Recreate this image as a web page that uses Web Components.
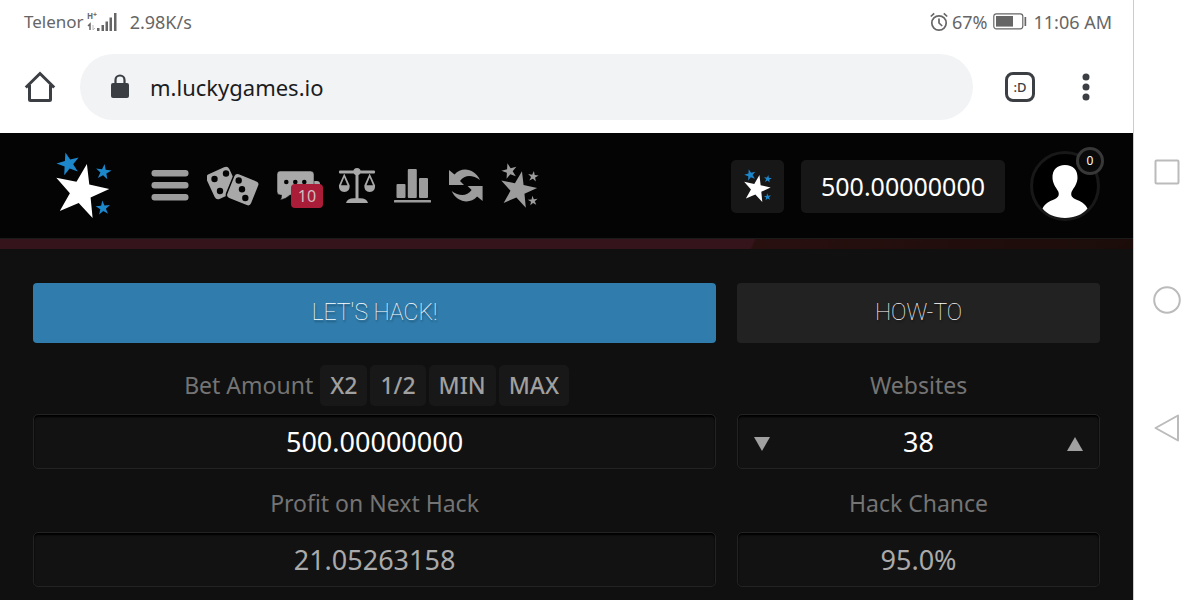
<!DOCTYPE html>
<html lang="en">
<head>
<meta charset="utf-8">
<meta name="viewport" content="width=device-width, initial-scale=1">
<title>Lucky Games – Hack</title>
<style>
  body { margin: 0; background: #fff; font-family: "Noto Sans", "Open Sans", sans-serif; }
</style>
</head>
<body>
<phone-screen>
  <status-bar></status-bar>
  <browser-bar></browser-bar>
  <game-header></game-header>
  <hack-panel></hack-panel>
  <nav-rail slot="rail"></nav-rail>
</phone-screen>

<script>
const define = (name, html, setup) => {
  const template = document.createElement('template');
  template.innerHTML = html;
  customElements.define(name, class extends HTMLElement {
    constructor() {
      super();
      this.attachShadow({ mode: 'open' }).append(template.content.cloneNode(true));
    }
    connectedCallback() { if (setup) setup(this, this.shadowRoot); }
  });
};

const RESET = `:host,*{box-sizing:border-box} svg{display:block} button{border:0;padding:0;background:none;font:inherit;color:inherit;cursor:pointer}`;

/* Five-pointed star, rotated clockwise by `turn` degrees. */
const star = (cx, cy, r, turn, fill) => {
  const pts = [];
  for (let i = 0; i < 10; i++) {
    const a = (turn - 90 + i * 36) * Math.PI / 180, d = i % 2 ? r * 0.39 : r;
    pts.push((cx + d * Math.cos(a)).toFixed(1) + ',' + (cy + d * Math.sin(a)).toFixed(1));
  }
  return `<polygon points="${pts.join(' ')}" fill="${fill}"/>`;
};
const stars = (w, h, big, small) => `<svg width="${w}" height="${h}" viewBox="0 0 56 68" aria-hidden="true">
  ${star(25, 40, 28.5, 12, big)}${star(12.5, 12, 12, -15, small)}${star(47.5, 20, 8.2, 8, small)}${star(47, 56, 7.6, -5, small)}</svg>`;

define('phone-screen', `
<style>${RESET}
  :host{display:flex;min-height:100vh}
  main{flex:1;min-width:0;display:flex;flex-direction:column}
</style>
<main><slot></slot></main><slot name="rail"></slot>`);

define('status-bar', `
<style>${RESET}
  :host{display:flex;justify-content:space-between;align-items:center;height:43px;padding:0 21px 0 24px;color:#666;font-size:18px;line-height:24px}
  div{display:flex;align-items:center}
  .carrier{font-size:17px}
  .net{margin:0 12px 0 3px}
  .alarm{margin-right:4px}
  .battery{margin:0 6px}
</style>
<div><span class="carrier">Telenor</span>
  <svg class="net" width="31" height="28" viewBox="0 -4 31 28" role="img" aria-label="Mobile signal">
    <text x="0" y="7" font-size="8" font-weight="700" fill="#666">H</text><text x="6" y="5" font-size="7" font-weight="700" fill="#666">+</text>
    <path d="M3 18v-6l-2 2" fill="none" stroke="#666" stroke-width="1.500"/><path d="M6 13v5l2-2" fill="none" stroke="#bbb"/>
    <path d="M10 16h2.500v3H10zM14.500 13H17v6h-2.500zM18.500 9.500H21V19h-2.500zM22.500 5.500H25V19h-2.500zM27 1h2.500v18H27z" fill="#666"/>
  </svg>
  <span>2.98K/s</span></div>
<div>
  <svg class="alarm" width="18" height="20" viewBox="0 0 18 20" fill="none" stroke="#666" stroke-width="1.700" role="img" aria-label="Alarm set"><circle cx="9" cy="11" r="7.200"/><path d="M9 6.500V11l3.200 3M.8 4.500 4.200 1.300M17.200 4.500 13.800 1.300"/></svg>
  <span>67%</span>
  <svg class="battery" width="34" height="17" viewBox="0 0 34 17" role="img" aria-label="Battery"><rect x=".8" y=".8" width="29" height="15" rx="2.500" fill="none" stroke="#666" stroke-width="1.200"/><path d="M3 3h17v10.600H3z" fill="#666"/><path d="M31.500 4H33.200v9h-1.700z" fill="#666"/></svg>
  <span>11:06 AM</span></div>`);

define('browser-bar', `
<style>${RESET}
  :host{display:flex;align-items:center;height:90px;padding:0 36px 2px 24px;color:#3b3f43}
  form{flex:1;min-width:0;display:flex;align-items:center;gap:20px;height:66px;margin:0 32px 0 24px;padding:0 30px;border-radius:33px;background:#f1f3f5}
  input{flex:1;min-width:0;border:0;padding:0;background:none;outline:0;font:22px/32px "Noto Sans",sans-serif;color:#1b1c1e}
  .tabs{width:30px;height:30px;border:3px solid #3b3f43;border-radius:8px;font-size:13px;line-height:22px;font-weight:500;margin-right:40px}
  .menu{width:22px;display:grid;place-items:center}
</style>
<button aria-label="Home"><svg width="32" height="32" viewBox="0 0 32 32" fill="none" stroke="currentColor" stroke-width="3"><path d="M1.800 16.500 16 2.500l14.200 14M5.500 14v14.500q0 1 1 1h19q1 0 1-1V14"/></svg></button>
<form>
  <svg width="20" height="26" viewBox="0 0 20 26"><rect x="1" y="9" width="18" height="15" rx="2" fill="currentColor"/><path d="M5.500 10V6a4.500 4.500 0 0 1 9 0v4" fill="none" stroke="currentColor" stroke-width="2.200"/></svg>
  <input type="text" aria-label="Address" value="m.luckygames.io">
</form>
<button class="tabs" aria-label="Tabs">:D</button>
<button class="menu" aria-label="More"><svg width="8" height="30" viewBox="0 0 8 30" fill="currentColor"><circle cx="4" cy="5" r="3.500"/><circle cx="4" cy="15" r="3.500"/><circle cx="4" cy="25" r="3.500"/></svg></button>`);

define('count-badge', `
<style>
  :host{display:grid;place-items:center;position:absolute;box-sizing:border-box;font-family:"Noto Sans",sans-serif}
</style><slot></slot>`);

define('game-header', `
<style>${RESET}
  :host{display:flex;align-items:center;height:116px;padding:0 33px 10px 56px;color:#9c9c9c;
    background:linear-gradient(#1b1b1b,#1b1b1b) 0 105px/100% 1px no-repeat,
      linear-gradient(115deg,#35141b 66.300%,#28100f 66.500%,#1b0c0a) 0 106px/100% 10px no-repeat,#040404}
  nav{display:flex;align-items:center;gap:18px;margin-left:39px}
  button{position:relative;flex:none}
  .spacer{flex:1}
  .alert{left:14px;top:13px;width:32px;height:24px;border-radius:4px;background:#a91d38;color:#d2bcc1;font-size:16px;line-height:22px}
  .token{width:53px;height:53px;border-radius:5px;background:#171717;display:grid;place-items:center}
  output{display:block;width:204px;margin:0 25px 0 17px;text-align:center;border-radius:5px;background:#171717;color:#fff;font-size:25px;line-height:53px}
  .level{right:-4px;top:-4px;width:28px;height:28px;border:3px solid #383838;border-radius:50%;background:#0a0a0a;color:#fff;font-size:12px;line-height:20px}
</style>
<a href="#" aria-label="Lucky Games">${stars(56, 68, '#fff', '#1d87cc')}</a>
<nav aria-label="Games">
  <button aria-label="Menu"><svg width="38" height="34" viewBox="0 0 38 34" fill="currentColor"><rect x=".5" y="1" width="37" height="6.500" rx="3"/><rect x=".5" y="13" width="37" height="6.500" rx="3"/><rect x=".5" y="25" width="37" height="6.500" rx="3"/></svg></button>
  <button aria-label="Dice"><svg width="52" height="44" viewBox="0 0 52 44"><rect x="2.500" y="5.500" width="25" height="27" rx="4" fill="#a8a8a8" transform="rotate(-25 15 19)"/><rect x="22.500" y="12" width="27" height="27" rx="4" fill="#a8a8a8" stroke="#040404" stroke-width="1.500" transform="rotate(22 35.500 25)"/><g fill="#040404"><circle cx="7.500" cy="15" r="3.200"/><circle cx="19" cy="9.500" r="3.200"/><circle cx="13" cy="27" r="3.200"/><circle cx="31.700" cy="16.500" r="3.200"/><circle cx="35" cy="25.200" r="3.200"/><circle cx="38.300" cy="34" r="3.200"/></g></svg></button>
  <button aria-label="Chat"><svg width="43" height="30" viewBox="0 0 43 30"><path d="M20 10h20q3 0 3 3v9q0 3-3 3l1 4-6-4H23q-3 0-3-3z" fill="#a8a8a8"/><path d="M3 0h30.500q3.500 0 3.500 3.500v17q0 3.500-3.500 3.500H13q-4 4-10 5 2-2 1.500-5H3.500Q0 24 0 20.500V3.500Q0 0 3 0z" fill="#a8a8a8" stroke="#040404" stroke-width=".5"/><g fill="#040404"><circle cx="9.300" cy="11" r="2.300"/><circle cx="18.300" cy="11" r="2.300"/><circle cx="27.300" cy="11" r="2.300"/></g></svg><count-badge class="alert">10</count-badge></button>
  <button aria-label="Fairness"><svg width="38" height="36" viewBox="0 0 38 36" fill="#a8a8a8"><circle cx="19" cy="3.600" r="3.600"/><rect x="1" y="2.500" width="36" height="3" rx="1"/><rect x="17.500" y="3" width="3" height="29"/><path d="M8 35q1-4.500 8-4.700h6q7 .2 8 4.700z"/><path fill-rule="evenodd" d="M6.500 6 11.700 17.500Q12 24 6.300 24 .7 24 .9 17.500L6 6zM6.200 9.500 3 17.300h6.500z"/><path fill-rule="evenodd" d="M31.900 6 37.100 17.500Q37.400 24 31.700 24 26.100 24 26.300 17.500L31.400 6zM31.700 9.500 28.500 17.300H35z"/></svg></button>
  <button aria-label="Statistics"><svg width="37" height="34" viewBox="0 0 37 34" fill="currentColor"><rect y="31" width="37" height="2.500" rx=".5"/><rect x="2.500" y="15" width="9" height="14" rx="1"/><rect x="13.800" y="0" width="9" height="29" rx="1"/><rect x="25" y="9" width="9" height="20" rx="1"/></svg></button>
  <button aria-label="Refresh"><svg width="34" height="34" viewBox="0 0 34 34" fill="currentColor"><path d="M0 1v15h15l-4-4c5-7 13-6 20-1C26 0 13-3 5.500 5.500z"/><path d="M0 1v15h15l-4-4c5-7 13-6 20-1C26 0 13-3 5.500 5.500z" transform="rotate(180 16.800 16.500)"/></svg></button>
  <button aria-label="Bonuses">${stars(38, 46, '#9c9c9c', '#9c9c9c')}</button>
</nav>
<span class="spacer"></span>
<button class="token" aria-label="Currency">${stars(28, 34, '#fff', '#1d87cc')}</button>
<output aria-label="Balance">500.00000000</output>
<button aria-label="Profile"><svg width="70" height="70" viewBox="0 0 70 70"><circle cx="35" cy="35" r="33.500" fill="#000" stroke="#181818" stroke-width="3"/><path d="M35 14c8 0 12.800 5 12.500 13-.3 6-3.500 9.500-5.500 13-1.500 3-1 6 3 8 6 2.500 10 4.500 12.500 9.500-5 6-13 9.500-22.500 9.500s-17.500-3.500-22.500-9.500C15 52.500 19 50.500 25 48c4-2 4.500-5 3-8-2-3.500-5.200-7-5.500-13C22.200 19 27 14 35 14z" fill="#fff"/></svg><count-badge class="level">0</count-badge></button>`);

define('action-button', `
<style>${RESET}
  :host{display:block}
  button{display:block;width:100%;height:60px;border-radius:4px;background:#222;color:#fff;font:100 23px/60px Roboto,sans-serif;text-shadow:1px 2px 2px rgba(0,0,0,.4)}
  :host([primary]) button{background:#307cac}
</style>
<button><slot></slot></button>`);

define('chip-button', `
<style>${RESET}
  :host{display:block}
  button{display:block;padding:0 10px;border-radius:5px;background:#181818;color:#a0a0a0;font:500 23px/41px "Noto Sans",sans-serif}
</style>
<button><slot></slot></button>`);

define('hack-field', `
<style>${RESET}
  :host{display:block}
  .head{display:flex;justify-content:center;align-items:center;gap:3px;height:41px;margin-bottom:8px}
  label{font-size:23px;line-height:41px;color:#747474;margin:0 4px}
  .box{display:flex;align-items:center;height:55px;padding:0 16px;border:1px solid #232323;border-radius:5px;background:#121212;box-shadow:inset 0 2px 2px #000}
  input{flex:1;width:0;min-width:0;border:0;padding:0;outline:0;background:none;text-align:center;font:27px/50px "Noto Sans",sans-serif;color:#fff}
  input:read-only{color:#aaa}
  .step{display:none}
  :host([stepper]) .step{display:block}
</style>
<div class="head"><label for="value"></label><slot></slot></div>
<div class="box">
  <button class="step" aria-label="Decrease"><svg width="16" height="18" viewBox="0 0 16 18"><path d="M0 4h16L8 18z" fill="#a0a0a0"/></svg></button>
  <input id="value" type="text">
  <button class="step" aria-label="Increase"><svg width="16" height="18" viewBox="0 0 16 18"><path d="M0 18h16L8 4z" fill="#a0a0a0"/></svg></button>
</div>`, (host, root) => {
  root.querySelector('label').textContent = host.getAttribute('label');
  const input = root.querySelector('input');
  input.value = host.getAttribute('value');
  input.readOnly = host.hasAttribute('readonly');
});

define('hack-panel', `
<style>${RESET}
  :host{display:block;flex:1;padding:34px 33px 13px;background:#101010}
  .grid{display:grid;grid-template-columns:32fr 17fr;column-gap:21px}
  .top{margin-bottom:22px}
  .rows{row-gap:14px}
</style>
<div class="grid top">
  <action-button primary>LET'S HACK!</action-button>
  <action-button>HOW-TO</action-button>
</div>
<div class="grid rows">
  <hack-field label="Bet Amount" value="500.00000000"><chip-button>X2</chip-button><chip-button>1/2</chip-button><chip-button>MIN</chip-button><chip-button>MAX</chip-button></hack-field>
  <hack-field label="Websites" value="38" stepper></hack-field>
  <hack-field label="Profit on Next Hack" value="21.05263158" readonly></hack-field>
  <hack-field label="Hack Chance" value="95.0%" readonly></hack-field>
</div>`);

define('nav-rail', `
<style>${RESET}
  :host{display:flex;flex-direction:column;align-items:center;justify-content:center;gap:100px;width:67px;border-left:1px solid #ccc;background:#fff}
  svg{fill:none;stroke:#bbb;stroke-width:2;stroke-linejoin:round}
</style>
<button aria-label="Recent apps"><svg width="28" height="28" viewBox="0 0 28 28"><rect x="2.500" y="2.500" width="23" height="23" rx="1"/></svg></button>
<button aria-label="Home"><svg width="28" height="28" viewBox="0 0 28 28"><circle cx="14" cy="14" r="12.800"/></svg></button>
<button aria-label="Back"><svg width="28" height="28" viewBox="0 0 28 28"><path d="M2.500 14 25 1.500v25z"/></svg></button>`);
</script>
</body>
</html>
